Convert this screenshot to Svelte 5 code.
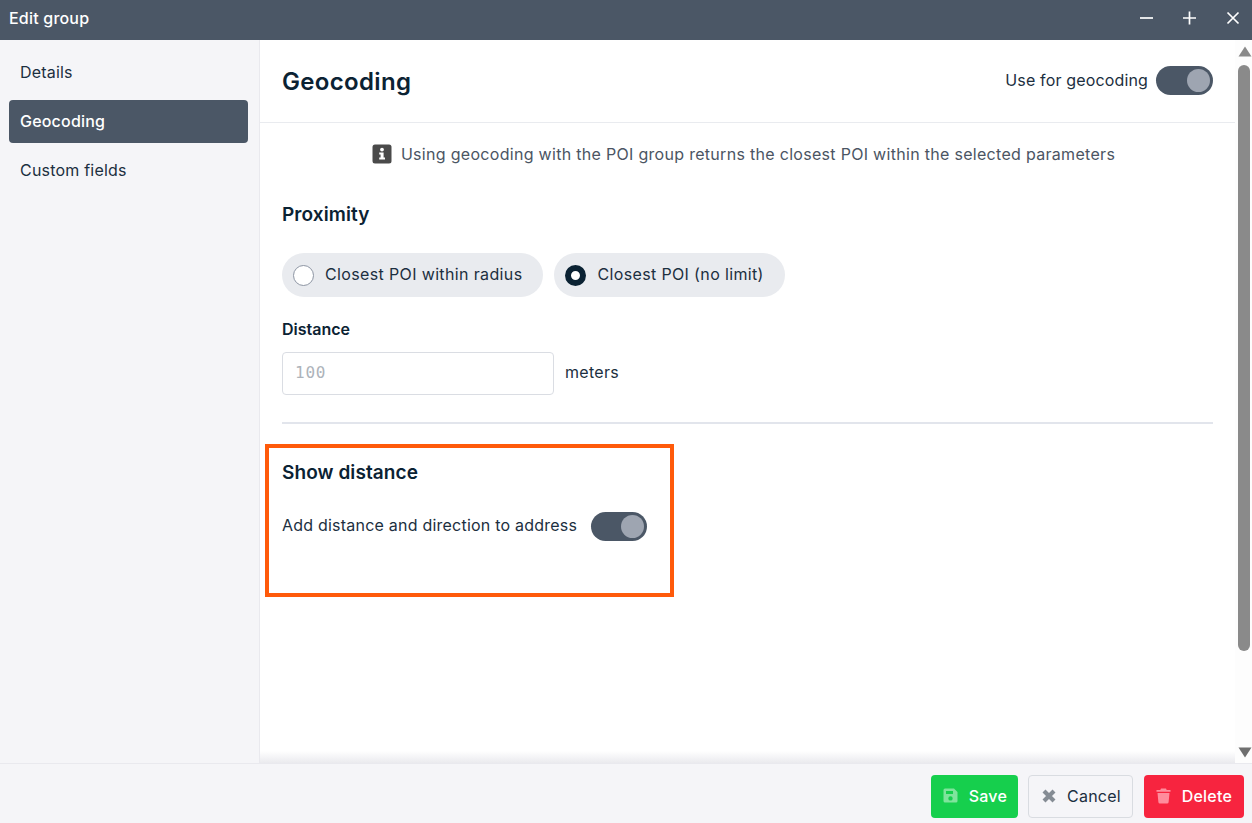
<script>
  const tabs = ['Details', 'Geocoding', 'Custom fields'];
</script>

<div class="window">
  <header class="titlebar">
    <span class="title">Edit group</span>
    <div class="winctl">
      <svg width="14" height="14" viewBox="0 0 14 14"><path d="M0 7H13" stroke="#fff" stroke-width="1.7"/></svg>
      <svg width="14" height="14" viewBox="0 0 14 14"><path d="M0 7H13M6.5 0.5V13.5" stroke="#fff" stroke-width="1.7"/></svg>
      <svg width="14" height="14" viewBox="0 0 14 14"><path d="M1.5 1.5L12.5 12.5M12.5 1.5L1.5 12.5" stroke="#fff" stroke-width="1.7"/></svg>
    </div>
  </header>

  <div class="body">
    <nav class="side">
      {#each tabs as t, i}
        <div class="tab" class:active={i === 1}>{t}</div>
      {/each}
    </nav>

    <main class="main">
      <div class="scrollarea">
        <div class="head">
          <h1>Geocoding</h1>
          <div class="row-use">
            <span>Use for geocoding</span>
            <span class="toggle"><i></i></span>
          </div>
        </div>

        <div class="content">
          <p class="info">
            <svg width="20" height="20" viewBox="0 0 20 20">
              <rect x="0.5" y="0.5" width="19" height="19" rx="2.5" fill="#4a4a4a"/>
              <circle cx="10" cy="5.6" r="1.9" fill="#fff"/>
              <path d="M7.2 8.6H11.6V13.6H13V15.6H7.2V13.6H8.6V10.6H7.2Z" fill="#fff"/>
            </svg>
            <span>Using geocoding with the POI group returns the closest POI within the selected parameters</span>
          </p>

          <h2 class="prox">Proximity</h2>

          <div class="radios">
            <div class="radio"><span class="dot"></span><span class="rtext">Closest POI within radius</span></div>
            <div class="radio"><span class="dot on"></span><span class="rtext">Closest POI (no limit)</span></div>
          </div>

          <div class="label">Distance</div>
          <div class="dist">
            <input class="input" placeholder="100" disabled />
            <span class="unit">meters</span>
          </div>

          <hr />

          <h2 class="show">Show distance</h2>
          <div class="addrow">
            <span class="addtext">Add distance and direction to address</span>
            <span class="toggle"><i></i></span>
          </div>
        </div>
        <div class="fade"></div>
      </div>

      <div class="scrollbar">
        <svg class="arr up" width="14" height="11" viewBox="0 0 14 11"><path d="M7 0.5L13.5 10.5H0.5Z" fill="#8a8a8a"/></svg>
        <div class="track"><div class="thumb"></div></div>
        <svg class="arr" width="14" height="11" viewBox="0 0 14 11"><path d="M7 10.5L13.5 0.5H0.5Z" fill="#6f6f6f"/></svg>
      </div>

      <div class="highlight"></div>
    </main>
  </div>

  <footer class="foot">
    <button class="btn save">
      <svg width="15" height="15" viewBox="0 0 15 15"><path fill-rule="evenodd" d="M2 0.5H11L14.5 4V13A1.5 1.5 0 0 1 13 14.5H2A1.5 1.5 0 0 1 0.5 13V2A1.5 1.5 0 0 1 2 0.5ZM3 3V6H10V3ZM7.5 8.2A2.2 2.2 0 1 0 7.5 12.6A2.2 2.2 0 1 0 7.5 8.2Z" fill="#7fe49c"/></svg>
      Save
    </button>
    <button class="btn cancel">
      <svg width="14" height="14" viewBox="0 0 14 14"><path d="M2 2L12 12M12 2L2 12" stroke="#858c94" stroke-width="4.2"/></svg>
      Cancel
    </button>
    <button class="btn del">
      <svg width="15" height="16" viewBox="0 0 15 16"><path d="M5 0.5H10L10.7 2H14.5V3.8H0.5V2H4.3ZM1.5 5H13.5L12.6 14.2A1.5 1.5 0 0 1 11.1 15.5H3.9A1.5 1.5 0 0 1 2.4 14.2Z" fill="#ff8c9c"/></svg>
      Delete
    </button>
  </footer>
</div>

<style>
  :global(body) {
    margin: 0;
    font-family: Inter, "Liberation Sans", sans-serif;
    color: #1c2f40;
  }
  .window {
    display: flex;
    flex-direction: column;
    width: 1252px;
    height: 823px;
    overflow: hidden;
    background: #fff;
    font-size: 16px;
    letter-spacing: 0.2px;
  }
  .titlebar {
    display: flex;
    align-items: center;
    justify-content: space-between;
    height: 40px;
    flex: none;
    padding: 0 12px 0 9px;
    background: #4b5766;
    color: #fff;
  }
  .title { font-size: 16px; font-weight: 500; letter-spacing: 0.2px; padding-bottom: 4px; }
  .winctl { display: flex; gap: 29px; padding-bottom: 4px; }
  .body { display: flex; flex: 1; min-height: 0; }
  .side {
    flex: none;
    display: flex;
    flex-direction: column;
    gap: 6px;
    padding: 11px 11px 0 9px;
    box-sizing: border-box;
    width: 260px;
    background: #f5f5f8;
    border-right: 1px solid #e9e9ee;
  }
  .tab {
    height: 43px;
    line-height: 43px;
    padding-left: 11px;
    border-radius: 4px;
    font-size: 16px;
  }
  .tab.active { background: #4b5766; color: #fff; font-weight: 500; }
  .main { position: relative; flex: 1; display: flex; min-width: 0; }
  .scrollarea { flex: 1; min-width: 0; position: relative; }
  .fade {
    position: absolute;
    left: 0;
    right: 0;
    bottom: 0;
    height: 12px;
    background: linear-gradient(to bottom, rgba(234, 234, 238, 0), rgba(234, 234, 238, 1));
  }
  .head {
    display: flex;
    align-items: center;
    justify-content: space-between;
    box-sizing: border-box;
    height: 83px;
    padding: 0 22px 2px;
    border-bottom: 1px solid #e9ebef;
  }
  h1 { margin: 0; padding-top: 2px; font-size: 24px; font-weight: 600; letter-spacing: 0.33px; color: #0b2233; }
  .row-use { display: flex; align-items: center; gap: 8px; font-size: 16px; letter-spacing: 0.15px; }
  .row-use .toggle { width: 57px; }
  .toggle {
    display: inline-flex;
    align-items: center;
    justify-content: flex-end;
    width: 56px;
    height: 29px;
    padding-right: 3px;
    box-sizing: border-box;
    border-radius: 15px;
    background: #4b5766;
  }
  .toggle i {
    display: block;
    width: 23px;
    height: 23px;
    border-radius: 50%;
    background: #9ea5b1;
  }
  .content { padding: 0 22px; }
  .info {
    display: flex;
    align-items: center;
    justify-content: center;
    gap: 9px;
    height: 20px;
    margin: 21px 0 0;
    padding-right: 8px;
    color: #4b5563;
    letter-spacing: 0.3px;
  }
  h2 { margin: 0; font-size: 19px; font-weight: 600; letter-spacing: 0.08px; color: #0b2233; }
  .prox { margin-top: 40px; line-height: 22px; }
  .radios { display: flex; gap: 11px; margin-top: 27px; }
  .radio {
    display: flex;
    align-items: center;
    gap: 11px;
    height: 44px;
    padding: 0 21px 0 11px;
    border-radius: 22px;
    background: #e9ebef;
    font-size: 16px;
    letter-spacing: 0.36px;
  }
  .rtext { padding-bottom: 2px; }
  .dot {
    box-sizing: border-box;
    width: 21px;
    height: 21px;
    border-radius: 50%;
    background: #fff;
    border: 1px solid #8d95a3;
  }
  .dot.on { border: 6.5px solid #0b2233; }
  .label { margin-top: 22px; font-weight: 600; line-height: 20px; font-size: 16px; letter-spacing: 0; color: #0b2233; }
  .dist { display: flex; align-items: center; gap: 11px; margin-top: 13px; font-size: 16px; }
  .unit { padding-bottom: 3px; letter-spacing: 0.3px; }
  .input {
    box-sizing: border-box;
    width: 272px;
    height: 43px;
    padding: 0 12px 2px;
    border: 1px solid #dadde3;
    border-radius: 4px;
    background: #fff;
    font-family: "DejaVu Sans Mono", monospace;
    font-size: 16px;
    letter-spacing: 0.8px;
  }
  .input::placeholder { color: #adb3ba; opacity: 1; }
  hr { margin: 27px 0 0; border: 0; height: 2px; background: #e2e5ec; }
  .show { margin-top: 38px; line-height: 22px; }
  .addrow { display: flex; align-items: center; gap: 14px; margin-top: 28px; font-size: 16px; }
  .addtext { padding-bottom: 3px; letter-spacing: 0.22px; }
  .scrollbar {
    width: 17px;
    flex: none;
    display: flex;
    flex-direction: column;
    align-items: center;
    background: #fdfdfd;
  }
  .arr { flex: none; margin: 0 0 5px 3px; }
  .arr.up { margin: 6px 0 0 3px; }
  .track { flex: 1; padding: 8px 0 0 3px; align-self: stretch; }
  .thumb { width: 12px; height: 586px; border-radius: 6px; background: #8a8a8a; }
  .highlight {
    position: absolute;
    left: 5px;
    top: 404px;
    width: 409px;
    height: 153px;
    box-sizing: border-box;
    border: 4px solid #ff5a0a;
    pointer-events: none;
  }
  .foot {
    display: flex;
    align-items: center;
    justify-content: flex-end;
    gap: 10px;
    flex: none;
    height: 60px;
    padding: 6px 8px 0 0;
    box-sizing: border-box;
    background: #f5f5f8;
    border-top: 1px solid #e9e9ee;
    position: relative;
  }
  .btn {
    display: flex;
    align-items: center;
    height: 43px;
    padding: 0 11px 2px;
    gap: 11px;
    border: 1px solid transparent;
    border-radius: 4px;
    font-family: inherit;
    font-size: 16px;
    letter-spacing: 0.2px;
    box-sizing: border-box;
  }
  .save { background: #16cf4d; color: #fff; font-weight: 500; padding-right: 10px; }
  .cancel { background: #f5f5f8; border-color: #d9dce1; color: #1c2f40; padding-left: 13px; }
  .del { background: #f7243f; color: #fff; font-weight: 500; margin-left: 1px; }
</style>
